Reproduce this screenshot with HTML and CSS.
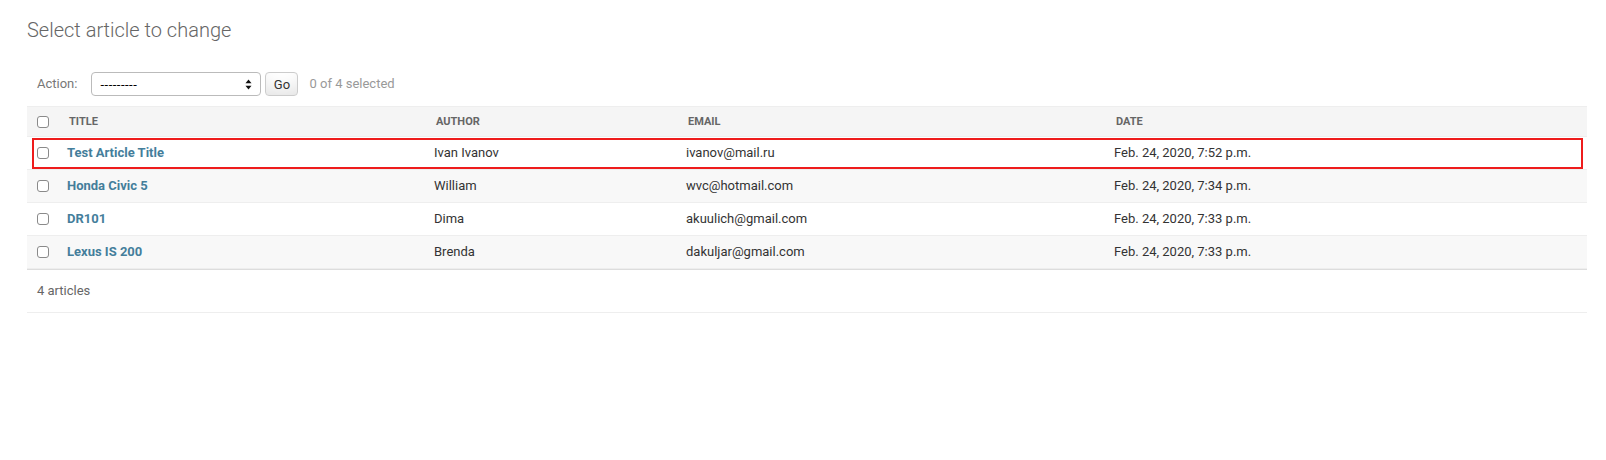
FILE: index.html
```html
<!DOCTYPE html>
<html lang="en">
<head>
<meta charset="utf-8">
<title>Select article to change</title>
<link rel="stylesheet" href="styles.css">
</head>
<body>
<div class="content">
  <h1 class="page-title">Select article to change</h1>
  <div class="changelist">
    <div class="actions">
      <label class="action-label">Action:</label>
      <span class="select-wrap">
        <select class="action-select"><option>---------</option></select>
        <svg class="select-arrows" width="7" height="11" viewBox="0 0 7 11"><path d="M3.5 0.5 L6.5 4.2 H0.5 Z" fill="#111"/><path d="M3.5 10.5 L6.5 6.8 H0.5 Z" fill="#111"/></svg>
      </span>
      <button class="go-button" type="button">Go</button>
      <span class="action-counter">0 of 4 selected</span>
    </div>
    <div class="results">
      <table class="result-list">
        <colgroup>
          <col class="col-check">
          <col class="col-title">
          <col class="col-author">
          <col class="col-email">
          <col class="col-date">
        </colgroup>
        <thead>
          <tr>
            <th class="check-cell"><input type="checkbox" class="cb"></th>
            <th>Title</th>
            <th>Author</th>
            <th>Email</th>
            <th>Date</th>
          </tr>
        </thead>
        <tbody>
          <tr class="row1">
            <td class="check-cell"><input type="checkbox" class="cb"></td>
            <th class="name-cell"><a href="#">Test Article Title</a></th>
            <td>Ivan Ivanov</td>
            <td>ivanov@mail.ru</td>
            <td>Feb. 24, 2020, 7:52 p.m.</td>
          </tr>
          <tr class="row2">
            <td class="check-cell"><input type="checkbox" class="cb"></td>
            <th class="name-cell"><a href="#">Honda Civic 5</a></th>
            <td>William</td>
            <td>wvc@hotmail.com</td>
            <td>Feb. 24, 2020, 7:34 p.m.</td>
          </tr>
          <tr class="row1">
            <td class="check-cell"><input type="checkbox" class="cb"></td>
            <th class="name-cell"><a href="#">DR101</a></th>
            <td>Dima</td>
            <td>akuulich@gmail.com</td>
            <td>Feb. 24, 2020, 7:33 p.m.</td>
          </tr>
          <tr class="row2">
            <td class="check-cell"><input type="checkbox" class="cb"></td>
            <th class="name-cell"><a href="#">Lexus IS 200</a></th>
            <td>Brenda</td>
            <td>dakuljar@gmail.com</td>
            <td>Feb. 24, 2020, 7:33 p.m.</td>
          </tr>
        </tbody>
      </table>
      <div class="highlight"></div>
    </div>
    <p class="paginator">4 articles</p>
  </div>
</div>
</body>
</html>
```

FILE: styles.css
```css
html, body {
  margin: 0;
  padding: 0;
  background: #fff;
}

body {
  font-family: Roboto, "Liberation Sans", Arial, sans-serif;
  color: #333;
  font-size: 14px;
}

.content {
  padding: 18px 19px 0 27px;
}

.page-title {
  margin: 0 0 20px 0;
  font-size: 20px;
  line-height: 24px;
  font-weight: 300;
  color: #666;
}

.actions {
  display: flex;
  align-items: center;
  height: 24px;
  padding: 10px;
  font-size: 13px;
  line-height: 24px;
}

.action-label {
  color: #777;
}

.select-wrap {
  position: relative;
  display: block;
  margin-left: 14px;
  width: 170px;
  height: 24px;
}

.action-select {
  -webkit-appearance: none;
  appearance: none;
  box-sizing: border-box;
  width: 170px;
  height: 24px;
  margin: 0;
  padding: 0 0 0 8px;
  border: 1px solid #bbb;
  border-radius: 4px;
  background: #fff;
  color: #000;
  font-family: Roboto, "Liberation Sans", Arial, sans-serif;
  font-size: 13px;
  letter-spacing: 0.5px;
}

.select-arrows {
  position: absolute;
  right: 9px;
  top: 7px;
}

.go-button {
  box-sizing: border-box;
  width: 33px;
  height: 24px;
  margin: 0 0 0 4px;
  padding: 0;
  border: 1px solid #ccc;
  border-radius: 4px;
  background: #fff;
  box-shadow: 0 -15px 20px -10px rgba(0, 0, 0, 0.12) inset;
  font-family: Roboto, "Liberation Sans", Arial, sans-serif;
  font-size: 13px;
  color: #333;
}

.action-counter {
  margin-left: 11px;
  color: #999;
}

.results {
  position: relative;
}

.result-list {
  width: 100%;
  table-layout: fixed;
  border-collapse: collapse;
}

.col-check { width: 32px; }
.col-title { width: 367px; }
.col-author { width: 252px; }
.col-email { width: 428px; }
.col-date { width: 481px; }

.result-list thead th {
  background: #f5f5f5;
  border-top: 1px solid #eee;
  border-bottom: 1px solid #eee;
  padding: 8px 10px;
  font-size: 11px;
  line-height: 13px;
  font-weight: 700;
  color: #666;
  text-align: left;
  text-transform: uppercase;
  vertical-align: middle;
}

.result-list td,
.result-list tbody th {
  padding: 8px;
  font-size: 13px;
  line-height: 16px;
  font-weight: 400;
  border-bottom: 1px solid #eee;
  text-align: left;
  vertical-align: middle;
  color: #333;
}

.result-list .check-cell {
  padding: 0;
  text-align: center;
}

.result-list thead th.check-cell {
  padding: 0;
}

.row1 { background: #fff; }
.row2 { background: #f8f8f8; }

.name-cell a {
  color: #447e9b;
  font-weight: 700;
  text-decoration: none;
}

.cb {
  -webkit-appearance: none;
  appearance: none;
  display: block;
  box-sizing: border-box;
  width: 12px;
  height: 12px;
  margin: 0 auto;
  border: 1px solid #8a8a8a;
  border-radius: 3px;
  background: #fff;
}

.highlight {
  position: absolute;
  left: 5px;
  right: 4px;
  top: 32px;
  height: 31px;
  box-sizing: border-box;
  border: 2px solid #ee1c1c;
  pointer-events: none;
}

.paginator {
  margin: 0;
  padding: 10px;
  font-size: 13px;
  line-height: 22px;
  color: #666;
  border-top: 1px solid #ddd;
  border-bottom: 1px solid #eee;
}
```
